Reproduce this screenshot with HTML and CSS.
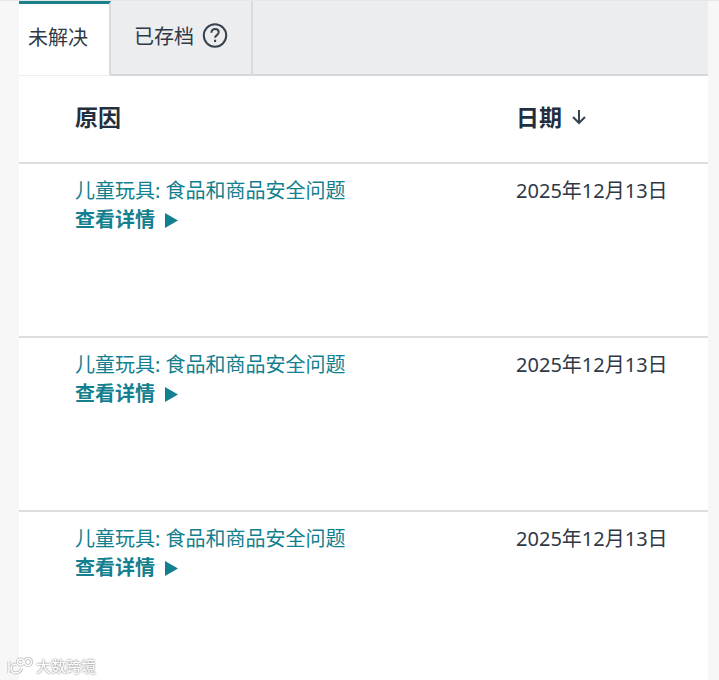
FILE: index.html
```
<!DOCTYPE html>
<html lang="zh-CN">
<head>
<meta charset="UTF-8" />
<meta name="viewport" content="width=device-width, initial-scale=1" />
<title>未解决</title>
<link rel="stylesheet" href="styles.css">
</head>
<body>

<main class="panel">
  <nav class="tabs">
    <button class="tab tab-active" type="button">未解决</button>
    <button class="tab" type="button">
      已存档
      <svg class="help" viewBox="0 0 26 26" aria-hidden="true">
        <circle cx="13" cy="12.5" r="11.2" />
        <path d="M9.4 9.7c0-2.2 1.6-3.6 3.7-3.6s3.6 1.3 3.6 3.2c0 2.7-3.6 2.9-3.6 5.4" />
        <path d="M13.1 16.7v2.4" />
      </svg>
    </button>
  </nav>

  <table class="issues">
    <thead>
      <tr>
        <th class="reason" scope="col">原因</th>
        <th class="date" scope="col">
          <button class="sort" type="button">
            日期
            <svg class="arrow" viewBox="0 0 16 18" aria-hidden="true">
              <path d="M8 1v13M2 8l6 6 6-6" />
            </svg>
          </button>
        </th>
      </tr>
    </thead>
    <tbody>
      <tr>
        <td class="reason">
          <a class="title" href="#">儿童玩具: 食品和商品安全问题</a>
          <a class="details" href="#">查看详情 <svg class="play" viewBox="0 0 13 16" aria-hidden="true"><path d="M0 0l13 7.5L0 15z" /></svg></a>
        </td>
        <td class="date">2025年12月13日</td>
      </tr>
      <tr>
        <td class="reason">
          <a class="title" href="#">儿童玩具: 食品和商品安全问题</a>
          <a class="details" href="#">查看详情 <svg class="play" viewBox="0 0 13 16" aria-hidden="true"><path d="M0 0l13 7.5L0 15z" /></svg></a>
        </td>
        <td class="date">2025年12月13日</td>
      </tr>
      <tr>
        <td class="reason">
          <a class="title" href="#">儿童玩具: 食品和商品安全问题</a>
          <a class="details" href="#">查看详情 <svg class="play" viewBox="0 0 13 16" aria-hidden="true"><path d="M0 0l13 7.5L0 15z" /></svg></a>
        </td>
        <td class="date">2025年12月13日</td>
      </tr>
    </tbody>
  </table>
</main>

<div class="watermark">
  <svg class="watermark-logo" viewBox="0 0 26 18" aria-hidden="true">
    <g class="logo-edge">
      <path d="M2 4v12M9 7c-3 0-5 2-5 4.5S6 16 9 16s5-2 5.5-5" />
      <circle cx="13.5" cy="5" r="3" /><circle cx="21" cy="5" r="3.5" />
    </g>
    <g class="logo-line">
      <path d="M2 4v12M9 7c-3 0-5 2-5 4.5S6 16 9 16s5-2 5.5-5" />
      <circle cx="13.5" cy="5" r="3" /><circle cx="21" cy="5" r="3.5" />
    </g>
  </svg>
  <span>大数跨境</span>
</div>

</body>
</html>
```
FILE: styles.css
```
* {
  box-sizing: border-box;
}

body {
  margin: 0;
  background-color: #f7f7f7;
  border-top: 1px solid #e6e7e8;
  color: #2f3946;
  font-family: "Noto Sans", "Noto Sans CJK SC", sans-serif;
  font-size: 20px;
  line-height: 29px;
}

button {
  padding: 0;
  border: 0;
  background: none;
  color: inherit;
  font: inherit;
  cursor: pointer;
}

a {
  color: #12808f;
  text-decoration: none;
}

.panel {
  min-height: calc(100vh - 1px);
  margin: 0 11px 0 19px;
  background-color: #fff;
}

.tabs {
  display: flex;
  height: 75px;
  background-color: #ebedee;
  box-shadow: inset 0 -2px #d5d8da;
}

.tab {
  display: flex;
  align-items: center;
  gap: 8px;
  padding: 0 23px 5px;
  border-right: 2px solid #d9dcde;
}

.tab-active {
  padding: 0 21px 4px 9px;
  border-top: 3px solid #1b7f8c;
  border-bottom: 1px solid #eee;
  background-color: #fff;
}

.help {
  width: 26px;
  height: 26px;
  fill: none;
  stroke: #38434f;
  stroke-width: 2;
}

.issues {
  width: 100%;
  border-collapse: collapse;
  table-layout: fixed;
}

.issues th,
.issues td {
  padding: 0;
  text-align: left;
  vertical-align: top;
}

.issues th {
  height: 87px;
  padding-top: 27px;
  color: #232f3e;
  font-size: 23px;
  font-weight: 700;
}

.issues td {
  height: 174px;
  padding-top: 12px;
  border-top: 2px solid #dcdddf;
}

.issues .reason {
  width: 72%;
  padding-left: 56px;
}

.issues .date {
  padding-left: 1px;
}

.sort {
  display: flex;
  align-items: center;
  gap: 9px;
}

.arrow {
  width: 16px;
  height: 18px;
  fill: none;
  stroke: #38434f;
  stroke-width: 2;
}

.title,
.details {
  display: block;
}

.details {
  font-weight: 700;
}

.play {
  width: 13px;
  height: 16px;
  margin-left: 5px;
  vertical-align: -2px;
  fill: #12808f;
}

.watermark {
  position: fixed;
  bottom: 4px;
  left: 7px;
  display: flex;
  align-items: center;
  gap: 3px;
  color: #fff;
  font-size: 15px;
  line-height: 20px;
  text-shadow: 0 0 2px #999, 0 0 2px #999;
}

.watermark-logo {
  width: 26px;
  height: 18px;
  fill: none;
}

.logo-edge {
  stroke: #bbb;
  stroke-width: 3;
}

.logo-line {
  stroke: #fff;
  stroke-width: 1.5;
}
```
